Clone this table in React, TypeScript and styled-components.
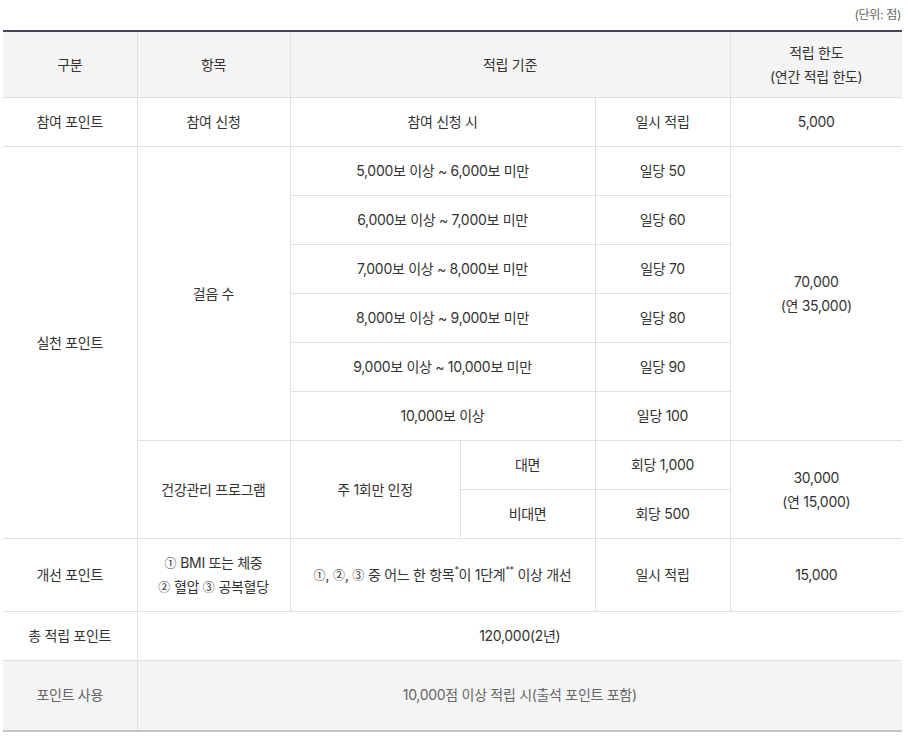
import React from "react";
import styled, { createGlobalStyle } from "styled-components";

const Global = createGlobalStyle`
  html, body { margin: 0; padding: 0; background: #fff; }
  body { font-family: Inter, "Noto Sans CJK KR", sans-serif; color: #333; }
`;

const Wrap = styled.div`
  padding: 6px 6px 0 3px;
  width: 899px;
`;

const Unit = styled.div`
  text-align: right;
  font-size: 12px;
  line-height: 18px;
  color: #666;
  padding-right: 1px;
  margin-bottom: 6px;
  letter-spacing: -0.3px;
`;

const Table = styled.table`
  width: 899px;
  border-collapse: collapse;
  table-layout: fixed;
  border-top: 2px solid #44465a;
  border-bottom: 2px solid #c4c4cc;
  font-size: 14px;
  line-height: 24px;
  letter-spacing: -0.3px;
`;

const Th = styled.th`
  background: #f4f4f4;
  font-weight: 400;
  color: #333;
  height: 65px;
  padding: 0 8px;
  border: 1px solid #e0e0e4;
  text-align: center;
  vertical-align: middle;
  &:first-child { border-left: none; }
  &:last-child { border-right: none; }
`;

const Td = styled.td<{ $muted?: boolean }>`
  background: ${(p) => (p.$muted ? "#f4f4f4" : "#fff")};
  color: ${(p) => (p.$muted ? "#666" : "#333")};
  padding: 12px 8px;
  border: 1px solid #e0e0e4;
  text-align: center;
  vertical-align: middle;
  box-sizing: border-box;
  &.first { border-left: none; }
  &.last { border-right: none; }
`;

const Row = styled.tr<{ $h: number }>`
  height: ${(p) => p.$h}px;
`;

const Sup = styled.sup`
  font-size: 9px;
  line-height: 0;
  vertical-align: 7px;
`;

const Circ = styled.span`
  font-family: "Noto Sans CJK KR", sans-serif;
  font-size: 12px;
  letter-spacing: 0;
`;

const walking = [
  ["5,000보 이상 ~ 6,000보 미만", "일당 50"],
  ["6,000보 이상 ~ 7,000보 미만", "일당 60"],
  ["7,000보 이상 ~ 8,000보 미만", "일당 70"],
  ["8,000보 이상 ~ 9,000보 미만", "일당 80"],
  ["9,000보 이상 ~ 10,000보 미만", "일당 90"],
];

export default function App() {
  return (
    <>
      <Global />
      <Wrap>
        <Unit>(단위: 점)</Unit>
        <Table>
          <colgroup>
            <col style={{ width: 134 }} />
            <col style={{ width: 153 }} />
            <col style={{ width: 170 }} />
            <col style={{ width: 135 }} />
            <col style={{ width: 135 }} />
            <col style={{ width: 172 }} />
          </colgroup>
          <thead>
            <tr>
              <Th>구분</Th>
              <Th>항목</Th>
              <Th colSpan={3}>적립 기준</Th>
              <Th>
                적립 한도
                <br />
                (연간 적립 한도)
              </Th>
            </tr>
          </thead>
          <tbody>
            <Row $h={49}>
              <Td className="first">참여 포인트</Td>
              <Td>참여 신청</Td>
              <Td colSpan={2}>참여 신청 시</Td>
              <Td>일시 적립</Td>
              <Td className="last">5,000</Td>
            </Row>
            {walking.map(([c, v], i) => (
              <Row $h={49} key={c}>
                {i === 0 && (
                  <Td className="first" rowSpan={8}>
                    실천 포인트
                  </Td>
                )}
                {i === 0 && <Td rowSpan={6}>걸음 수</Td>}
                <Td colSpan={2}>{c}</Td>
                <Td>{v}</Td>
                {i === 0 && (
                  <Td className="last" rowSpan={6}>
                    70,000
                    <br />
                    (연 35,000)
                  </Td>
                )}
              </Row>
            ))}
            <Row $h={49}>
              <Td colSpan={2}>10,000보 이상</Td>
              <Td>일당 100</Td>
            </Row>
            <Row $h={49}>
              <Td rowSpan={2}>건강관리 프로그램</Td>
              <Td rowSpan={2}>주 1회만 인정</Td>
              <Td>대면</Td>
              <Td>회당 1,000</Td>
              <Td className="last" rowSpan={2}>
                30,000
                <br />
                (연 15,000)
              </Td>
            </Row>
            <Row $h={49}>
              <Td>비대면</Td>
              <Td>회당 500</Td>
            </Row>
            <Row $h={73}>
              <Td className="first">개선 포인트</Td>
              <Td>
                <Circ>①</Circ> BMI 또는 체중
                <br />
                <Circ>②</Circ> 혈압 <Circ>③</Circ> 공복혈당
              </Td>
              <Td colSpan={2}>
                <Circ>①</Circ>, <Circ>②</Circ>, <Circ>③</Circ> 중 어느 한 항목<Sup>*</Sup>이 1단계
                <Sup>**</Sup> 이상 개선
              </Td>
              <Td>일시 적립</Td>
              <Td className="last">15,000</Td>
            </Row>
            <Row $h={49}>
              <Td className="first">총 적립 포인트</Td>
              <Td className="last" colSpan={5}>
                120,000(2년)
              </Td>
            </Row>
            <Row $h={70}>
              <Td className="first" $muted>
                포인트 사용
              </Td>
              <Td className="last" $muted colSpan={5}>
                10,000점 이상 적립 시(출석 포인트 포함)
              </Td>
            </Row>
          </tbody>
        </Table>
      </Wrap>
    </>
  );
}
